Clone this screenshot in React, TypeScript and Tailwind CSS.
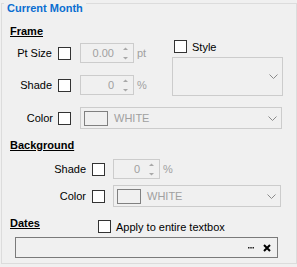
import React from 'react'

const font = { fontFamily: '"Liberation Sans", Arial, sans-serif' }

function Check({ className = '' }: { className?: string }) {
  return <div className={`w-[13px] h-[13px] shrink-0 border border-[#333333] bg-white ${className}`} />
}

function Chevron() {
  return (
    <svg width="9" height="5" viewBox="0 0 9 5" className="shrink-0">
      <path d="M0.5 0.5 L4.5 4.5 L8.5 0.5" fill="none" stroke="#8a8a8a" strokeWidth="1" />
    </svg>
  )
}

function Spin({ value, width, unit }: { value: string; width: string; unit: string }) {
  return (
    <div className="flex items-center">
      <div className={`${width} h-[20px] border border-[#cccccc] flex items-center justify-end pr-[4px]`}>
        <span className="text-[#a0a0a0] mr-[8px]">{value}</span>
        <svg width="7" height="14" viewBox="0 0 7 14">
          <path d="M1 4 L3.5 1.5 L6 4 Z" fill="#a8a8a8" />
          <path d="M1 11 L3.5 13.5 L6 11 Z" fill="#a8a8a8" />
        </svg>
      </div>
      <span className="ml-[3px] text-[#a0a0a0]">{unit}</span>
    </div>
  )
}

function ColorCombo({ width }: { width: string }) {
  return (
    <div className={`${width} h-[22px] border border-[#cccccc] flex items-center pl-[3px] pr-[4px]`}>
      <div className="w-[24px] h-[15px] border border-[#808080]" />
      <span className="ml-[6px] text-[#a0a0a0] flex-1">WHITE</span>
      <Chevron />
    </div>
  )
}

export default function App() {
  return (
    <div className="w-[297px] h-[267px] bg-[#f0f0f0] pt-[3px] pl-[1px] relative text-[11px] text-black" style={font}>
      <div className="absolute left-[4px] top-[1px] px-[3px] bg-[#f0f0f0] leading-[14px] font-bold text-[#0a6ed1]">
        Current Month
      </div>
      <div className="w-[296px] h-[261px] border border-[#dcdcdc] pl-[8px] leading-[14px]">
        {/* Frame */}
        <div className="mt-[20px] font-bold underline">Frame</div>
        <div className="mt-[2px] flex">
          <div className="w-[162px] pt-[3px] flex flex-col gap-[12px]">
            <div className="flex items-center h-[20px]">
              <span className="w-[42px] text-right">Pt Size</span>
              <Check className="ml-[6px]" />
              <div className="ml-[9px]">
                <Spin value="0.00" width="w-[54px]" unit="pt" />
              </div>
            </div>
            <div className="flex items-center h-[20px]">
              <span className="w-[42px] text-right">Shade</span>
              <Check className="ml-[6px]" />
              <div className="ml-[9px]">
                <Spin value="0" width="w-[54px]" unit="%" />
              </div>
            </div>
          </div>
          <div className="flex flex-col">
            <div className="flex items-center h-[13px] ml-[2px]">
              <Check />
              <span className="ml-[5px]">Style</span>
            </div>
            <div className="mt-[4px] w-[111px] h-[39px] border border-[#cccccc] flex items-center justify-end pr-[4px]">
              <Chevron />
            </div>
          </div>
        </div>
        <div className="mt-[11px] flex items-center h-[22px]">
          <span className="w-[43px] text-right">Color</span>
          <Check className="ml-[5px]" />
          <div className="ml-[9px]">
            <ColorCombo width="w-[202px]" />
          </div>
        </div>

        {/* Background */}
        <div className="mt-[9px] font-bold underline">Background</div>
        <div className="mt-[7px] flex items-center h-[20px]">
          <span className="w-[76px] text-right">Shade</span>
          <Check className="ml-[6px]" />
          <div className="ml-[8px]">
            <Spin value="0" width="w-[47px]" unit="%" />
          </div>
        </div>
        <div className="mt-[6px] flex items-center h-[22px]">
          <span className="w-[76px] text-right">Color</span>
          <Check className="ml-[6px]" />
          <div className="ml-[8px]">
            <ColorCombo width="w-[168px]" />
          </div>
        </div>

        {/* Dates */}
        <div className="mt-[9px] flex items-start h-[17px]">
          <span className="w-[88px] font-bold underline">Dates</span>
          <div className="mt-[4px] flex items-center h-[13px]">
            <Check />
            <span className="ml-[5px]">Apply to entire textbox</span>
          </div>
        </div>
        <div className="mt-[4px] ml-[5px] w-[263px] h-[21px] border border-[#7a7a7a] flex items-center justify-end pr-[6px] gap-[9px]">
          <svg width="6" height="2" viewBox="0 0 6 2">
            <rect x="0" y="0" width="1.5" height="1.5" fill="#222" />
            <rect x="2.25" y="0" width="1.5" height="1.5" fill="#222" />
            <rect x="4.5" y="0" width="1.5" height="1.5" fill="#222" />
          </svg>
          <svg width="8" height="8" viewBox="0 0 8 8">
            <path d="M1 1 L7 7 M7 1 L1 7" stroke="#000" strokeWidth="2" />
          </svg>
        </div>
      </div>
    </div>
  )
}
